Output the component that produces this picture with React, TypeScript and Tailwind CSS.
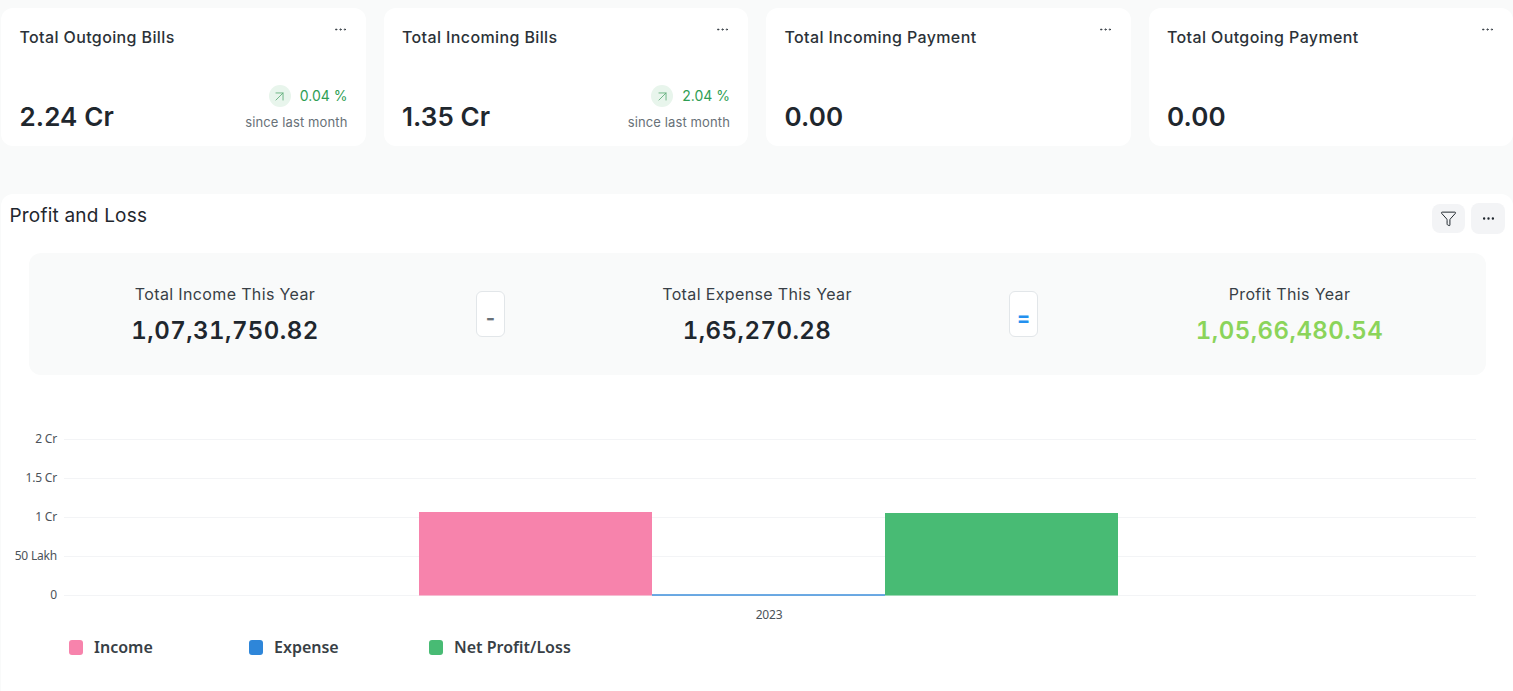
import React from "react";
import { ArrowUpRight, Ellipsis, Filter } from "lucide-react";

const cards = [
  { title: "Total Outgoing Bills", value: "2.24 Cr", pct: "0.04 %" },
  { title: "Total Incoming Bills", value: "1.35 Cr", pct: "2.04 %" },
  { title: "Total Incoming Payment", value: "0.00" },
  { title: "Total Outgoing Payment", value: "0.00" },
];

function Card({ title, value, pct }: { title: string; value: string; pct?: string }) {
  return (
    <div className="relative flex h-[138px] flex-1 flex-col rounded-[12px] bg-white pl-[18.5px] pr-[18px]">
      <div className="mt-[19px] flex items-start justify-between">
        <span className="text-[16px] leading-[20px] font-medium tracking-[0.38px] text-[#2b3238]">{title}</span>
        <Ellipsis className="mt-[-5px] h-[15px] w-[15px] text-[#383f46]" strokeWidth={1.6} />
      </div>
      <div className="relative mt-auto mb-[13px] flex items-end justify-between">
        <span className="text-[26px] leading-[32px] font-semibold tracking-[0.1px] text-[#1f272e]">{value}</span>
        {pct && (
          <div className="mb-[3px] flex flex-col items-end">
            <div className="flex items-center gap-[9px]">
              <span className="flex h-[22px] w-[22px] items-center justify-center rounded-full bg-[#e8f5ec]">
                <ArrowUpRight className="h-[17px] w-[17px] text-[#62ae7b]" strokeWidth={1.25} />
              </span>
              <span className="text-[14px] leading-[20px] text-[#2f9e54]">{pct}</span>
            </div>
            <span className="mt-[7px] text-[13px] leading-[16px] tracking-[0.12px] text-[#687178]">since last month</span>
          </div>
        )}
      </div>
    </div>
  );
}

function Stat({ label, value, className, valueClass }: { label: string; value: string; className: string; valueClass: string }) {
  return (
    <div className={`flex flex-col items-center pt-[1px] ${className}`}>
      <span className="text-[16px] leading-[20px] tracking-[0.36px] text-[#383f46]">{label}</span>
      <span className={`mt-[13px] text-[24px] leading-[28px] font-semibold tracking-[0.45px] tabular-nums ${valueClass}`}>{value}</span>
    </div>
  );
}

function Op({ children, className, margin }: { children: string; className: string; margin: string }) {
  return (
    <div className={`flex h-[46px] w-[29px] items-center justify-center rounded-[6px] border border-[#e2e6e9] bg-white pt-[8px] text-[20px] font-bold ${className} ${margin}`}>
      {children}
    </div>
  );
}

function Chart() {
  const grid = [
    { y: 439, t: "2 Cr" },
    { y: 478, t: "1.5 Cr" },
    { y: 517, t: "1 Cr" },
    { y: 556, t: "50 Lakh" },
    { y: 595, t: "0" },
  ];
  const font = { fontFamily: '"Noto Sans", sans-serif', fontSize: 12, letterSpacing: "-0.2px" };
  return (
    <svg width="1512" height="224" viewBox="1 405 1512 224" className="mt-[30px] block">
      {grid.map((g) => (
        <g key={g.y}>
          <line x1={64} x2={1476} y1={g.y + 0.5} y2={g.y + 0.5} stroke="#f3f4f6" />
          <text x={57} y={g.y + 4} textAnchor="end" fill="#4b5259" style={font}>{g.t}</text>
        </g>
      ))}
      <rect x={419} y={512} width={233} height={83.5} fill="#f783ac" />
      <rect x={652} y={594.3} width={233} height={1.4} fill="#2e86d9" />
      <rect x={885} y={513} width={233} height={82.5} fill="#48bb74" />
      <text x={769} y={619} textAnchor="middle" fill="#4b5259" style={font}>2023</text>
    </svg>
  );
}

function Legend() {
  const items = [
    { t: "Income", c: "bg-[#f783ac]", w: "w-[180px]" },
    { t: "Expense", c: "bg-[#2e86d9]", w: "w-[180px]" },
    { t: "Net Profit/Loss", c: "bg-[#48bb74]", w: "" },
  ];
  return (
    <div className="mt-[7px] flex pl-[68px] font-['Noto_Sans',sans-serif]">
      {items.map((i) => (
        <div key={i.t} className={`flex items-center gap-[11px] ${i.w}`}>
          <span className={`h-[15px] w-[14px] rounded-[3px] ${i.c}`} />
          <span className="text-[16px] leading-[22px] font-semibold text-[#383f46]">{i.t}</span>
        </div>
      ))}
    </div>
  );
}

export default function App() {
  return (
    <div className="h-[691px] w-[1513px] overflow-hidden bg-[#f9fafa] pt-[8px] pl-[1px] font-['Inter',sans-serif]">
      <div className="flex gap-[18px]">
        {cards.map((c) => (
          <Card key={c.title} {...c} />
        ))}
      </div>
      <div className="mt-[48px] h-[500px] rounded-t-[12px] bg-white">
        <div className="flex items-start justify-between pt-[9px] pr-[8px] pl-[8.5px]">
          <span className="mt-[1px] text-[19px] leading-[24px] font-normal tracking-[0.2px] text-[#1f272e]">Profit and Loss</span>
          <div className="flex items-center gap-[6px]">
            <button className="flex h-[29px] w-[33px] items-center justify-center rounded-[8px] bg-[#f3f4f6]">
              <Filter className="h-[17px] w-[17px] text-[#1f272e]" strokeWidth={1.4} />
            </button>
            <button className="flex h-[31px] w-[34px] items-center justify-center rounded-[8px] bg-[#f3f4f6]">
              <Ellipsis className="h-[15px] w-[15px] text-[#1f272e]" strokeWidth={1.8} />
            </button>
          </div>
        </div>
        <div className="mx-[28px] mt-[19px] flex h-[122px] w-[1457px] items-center rounded-[12px] bg-[#f9fafa]">
          <Stat label="Total Income This Year" value="1,07,31,750.82" className="w-[392px]" valueClass="text-[#1f272e]" />
          <Op className="text-[#687178]" margin="ml-[55px]">-</Op>
          <Stat label="Total Expense This Year" value="1,65,270.28" className="flex-1" valueClass="text-[#1f272e]" />
          <Op className="text-[#2490ef]" margin="mr-[55px]">=</Op>
          <Stat label="Profit This Year" value="1,05,66,480.54" className="w-[393px]" valueClass="text-[#8bd45a]" />
        </div>
        <Chart />
        <Legend />
      </div>
    </div>
  );
}
